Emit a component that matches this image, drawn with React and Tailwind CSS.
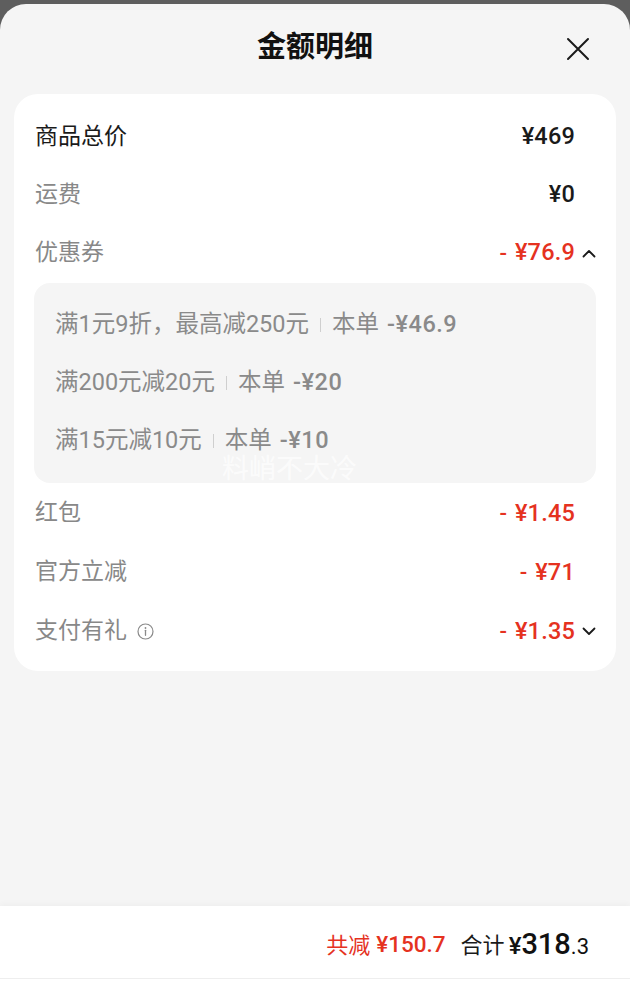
import React from "react";

const FONT = { fontFamily: "Roboto, 'Noto Sans CJK SC', sans-serif" };

function ChevronUp() {
  return (
    <svg width="14" height="9" viewBox="0 0 14 9" fill="none">
      <path d="M1.5 7.5L7 2l5.5 5.5" stroke="#1a1a1a" strokeWidth="1.8" strokeLinecap="round" strokeLinejoin="round" />
    </svg>
  );
}

function ChevronDown() {
  return (
    <svg width="14" height="9" viewBox="0 0 14 9" fill="none">
      <path d="M1.5 1.5L7 7l5.5-5.5" stroke="#1a1a1a" strokeWidth="1.8" strokeLinecap="round" strokeLinejoin="round" />
    </svg>
  );
}

function InfoIcon() {
  return (
    <svg width="17" height="17" viewBox="0 0 17 17" fill="none">
      <circle cx="8.5" cy="8.5" r="7.5" stroke="#8a8a8a" strokeWidth="1.2" />
      <circle cx="8.5" cy="5" r="0.9" fill="#8a8a8a" />
      <path d="M8.5 7.3v5" stroke="#8a8a8a" strokeWidth="1.3" strokeLinecap="round" />
    </svg>
  );
}

function Row({ label, value, dark, red, icon, chevron }) {
  return (
    <div className="flex h-[58px] items-center">
      <div className={`flex items-center gap-[10px] text-[23px] ${dark ? "text-[#1a1a1a]" : "text-[#888888]"}`}>
        <span>{label}</span>
        {icon}
      </div>
      <div className="flex-1" />
      {red && <span className="mr-[8px] text-[22px] font-medium text-[#e5321f]">-</span>}
      <span className={`text-[23.5px] font-medium tracking-[0.2px] ${red ? "text-[#e5321f]" : "text-[#1a1a1a]"}`}>{value}</span>
      <div className="flex w-[21px] justify-end">{chevron}</div>
    </div>
  );
}

function Coupon({ rule, amount }) {
  return (
    <div className="flex h-[58px] items-center text-[23.5px] text-[#8a8a8a]">
      <span>{rule}</span>
      <span className="mx-[11px] h-[14px] w-px bg-[#cfcfcf]" />
      <span>本单</span>
      <span className="ml-[8px] font-medium tracking-[0.5px]">-¥{amount}</span>
    </div>
  );
}

export default function App() {
  return (
    <div className="bg-[#5e5e5e] pt-[4px]" style={FONT}>
      <div className="relative flex h-[984px] flex-col overflow-hidden rounded-t-[26px] bg-[#f5f5f5]">
        <div className="relative flex h-[88px] items-center justify-center">
          <h1 className="text-[29px] font-bold text-[#111111]">金额明细</h1>
          <button className="absolute right-[40px] top-[33px]">
            <svg width="24" height="24" viewBox="0 0 24 24" fill="none">
              <path d="M2 2l20 20M22 2L2 22" stroke="#1a1a1a" strokeWidth="2" strokeLinecap="round" />
            </svg>
          </button>
        </div>

        <div className="mx-[14px] mt-[2px] rounded-[24px] bg-white px-[20px] pb-[10px] pt-[14px]">
          <div className="pl-px">
            <Row label="商品总价" value="¥469" dark />
            <Row label="运费" value="¥0" />
            <Row label="优惠券" value="¥76.9" red chevron={<ChevronUp />} />
          </div>
          <div className="mt-px rounded-[16px] bg-[#f5f5f5] pb-[13px] pl-[21px] pt-[13px]">
            <Coupon rule="满1元9折，最高减250元" amount="46.9" />
            <Coupon rule="满200元减20元" amount="20" />
            <Coupon rule="满15元减10元" amount="10" />
          </div>
          <div className="pl-px pt-px [&>div]:h-[59px]">
            <Row label="红包" value="¥1.45" red />
            <Row label="官方立减" value="¥71" red />
            <Row label="支付有礼" value="¥1.35" red icon={<InfoIcon />} chevron={<ChevronDown />} />
          </div>
        </div>

        <div className="flex-1" />

        <div className="flex h-[82px] flex-col bg-white shadow-[0_-2px_6px_rgba(0,0,0,0.03)]">
          <div className="flex h-[72px] items-center justify-end pr-[41px] pt-[6px]">
            <span className="text-[22px] text-[#e5321f]">共减</span>
            <span className="ml-[6px] text-[22.5px] font-medium text-[#e5321f]">¥150.7</span>
            <span className="ml-[15px] text-[22px] text-[#1a1a1a]">合计</span>
            <span className="ml-[4px] flex items-baseline text-[#111111]">
              <span className="text-[24px] font-medium">¥</span>
              <span className="text-[29px] font-medium">318</span>
              <span className="text-[22px]">.3</span>
            </span>
          </div>
          <div className="h-px bg-[#eeeeee]" />
        </div>

        <div className="pointer-events-none absolute left-[222px] top-[445px] text-[27px] text-white/70">
          料峭不大冷
        </div>
      </div>
    </div>
  );
}
